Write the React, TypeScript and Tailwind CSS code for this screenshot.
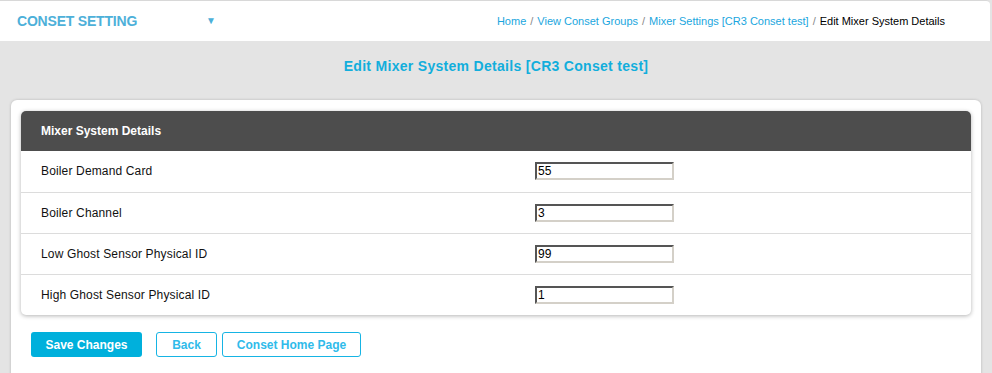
const rows = [
  { label: "Boiler Demand Card", value: "55" },
  { label: "Boiler Channel", value: "3" },
  { label: "Low Ghost Sensor Physical ID", value: "99" },
  { label: "High Ghost Sensor Physical ID", value: "1" },
];

export default function App() {
  return (
    <div className="w-[992px] h-[373px] overflow-hidden bg-[#e4e4e4] font-['Liberation_Sans',Arial,sans-serif]">
      <header className="h-[41px] mr-[2px] bg-white border-t border-[#d8d8d8] rounded-tr-[4px] flex items-center justify-between pl-[17px] pr-[45px]">
        <div className="flex items-center">
          <span className="w-[189px] text-[14px] font-bold text-[#4db0d9] tracking-[-0.2px]">
            CONSET SETTING
          </span>
          <span className="text-[10px] text-[#4db0d9] leading-none">▼</span>
        </div>
        <nav className="flex items-center text-[11px] text-[#1aa6de]">
          <a>Home</a>
          <span className="mx-[4px] text-[#888]">/</span>
          <a>View Conset Groups</a>
          <span className="mx-[4px] text-[#888]">/</span>
          <a>Mixer Settings [CR3 Conset test]</a>
          <span className="mx-[4px] text-[#888]">/</span>
          <span className="text-black">Edit Mixer System Details</span>
        </nav>
      </header>

      <h1 className="h-[59px] pb-[8px] flex items-center justify-center text-[14px] font-bold text-[#12aedc] tracking-[0.3px]">
        Edit Mixer System Details [CR3 Conset test]
      </h1>

      <main className="mx-[11px] h-[280px] bg-white rounded-t-[6px] shadow-[0_0_3px_rgba(0,0,0,0.2)] pt-[11px] px-[10px]">
        <section className="rounded-[5px] shadow-[0_1px_4px_rgba(0,0,0,0.3)] bg-white overflow-hidden">
          <div className="h-[40px] bg-[#4d4d4d] flex items-center px-[20px] text-[12px] font-bold text-white">
            Mixer System Details
          </div>
          {rows.map((row, i) => (
            <div
              key={row.label}
              className={`h-[41px] pb-[1px] flex items-center ${i > 0 ? "border-t border-[#dcdcdc]" : ""}`}
            >
              <label className="w-[514px] pl-[20px] text-[12px] text-[#111] tracking-[0.15px]">{row.label}</label>
              <input
                type="text"
                defaultValue={row.value}
                className="w-[139px] h-[18px] px-[1px] text-[12px] text-black bg-white border-2 border-t-[#555] border-l-[#555] border-b-[#d4d0c8] border-r-[#d4d0c8] outline-none"
              />
            </div>
          ))}
        </section>

        <div className="flex items-center mt-[17px] ml-[10px] text-[12px] font-bold">
          <button className="w-[111px] h-[25px] rounded-[3px] bg-[#00b0dc] text-white">
            Save Changes
          </button>
          <button className="ml-[14px] w-[61px] h-[25px] rounded-[3px] border border-[#16b4e4] text-[#30bbea] bg-white">
            Back
          </button>
          <button className="ml-[5px] w-[139px] h-[25px] rounded-[3px] border border-[#16b4e4] text-[#30bbea] bg-white">
            Conset Home Page
          </button>
        </div>
      </main>
    </div>
  );
}
